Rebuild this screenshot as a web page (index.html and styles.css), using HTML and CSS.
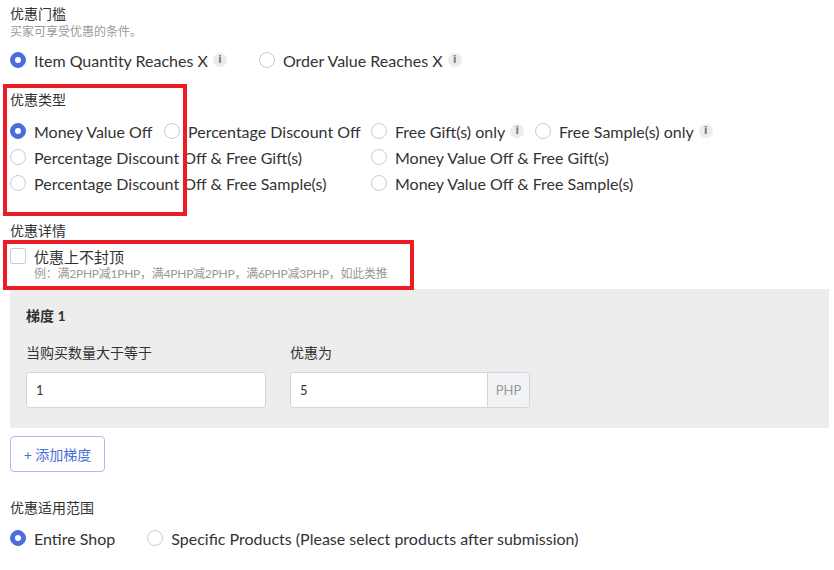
FILE: index.html
```html
<!DOCTYPE html>
<html lang="zh-CN">
<head>
<meta charset="UTF-8">
<meta name="viewport" content="width=device-width, initial-scale=1.0">
<title>优惠设置</title>
<link rel="stylesheet" href="styles.css">
</head>
<body>
<div id="wrapper">
    <!-- 优惠门槛 -->
    <div class="title">优惠门槛</div>
    <div class="hint">买家可享受优惠的条件。</div>
    <div class="radioRow">
        <label class="radio"><span class="dot on"></span>Item Quantity Reaches X<span class="info">i</span></label>
        <label class="radio"><span class="dot"></span>Order Value Reaches X<span class="info">i</span></label>
    </div>

    <!-- 优惠类型 -->
    <div class="title typeTitle">优惠类型</div>
    <div class="typeGrid">
        <label class="radio"><span class="dot on"></span>Money Value Off</label>
        <label class="radio"><span class="dot"></span>Percentage Discount Off</label>
        <label class="radio"><span class="dot"></span>Free Gift(s) only<span class="info">i</span></label>
        <label class="radio"><span class="dot"></span>Free Sample(s) only<span class="info">i</span></label>
        <label class="radio span2"><span class="dot"></span>Percentage Discount Off &amp; Free Gift(s)</label>
        <label class="radio span2"><span class="dot"></span>Money Value Off &amp; Free Gift(s)</label>
        <label class="radio span2"><span class="dot"></span>Percentage Discount Off &amp; Free Sample(s)</label>
        <label class="radio span2"><span class="dot"></span>Money Value Off &amp; Free Sample(s)</label>
    </div>

    <!-- 优惠详情 -->
    <div class="title detailTitle">优惠详情</div>
    <label class="check"><span class="box"></span>优惠上不封顶</label>
    <div class="example">例：满2PHP减1PHP，满4PHP减2PHP，满6PHP减3PHP，如此类推</div>

    <div class="tier">
        <div class="tierName">梯度 1</div>
        <div class="tierFields">
            <div class="field">
                <div class="fieldLabel">当购买数量大于等于</div>
                <div class="input">1</div>
            </div>
            <div class="field">
                <div class="fieldLabel">优惠为</div>
                <div class="input group"><span class="val">5</span><span class="addon">PHP</span></div>
            </div>
        </div>
    </div>
    <button class="addBtn">+ 添加梯度</button>

    <!-- 优惠适用范围 -->
    <div class="title scopeTitle">优惠适用范围</div>
    <div class="radioRow">
        <label class="radio"><span class="dot on"></span>Entire Shop</label>
        <label class="radio"><span class="dot"></span>Specific Products (Please select products after submission)</label>
    </div>

    <!-- 标注框 -->
    <div class="mark mark1"></div>
    <div class="mark mark2"></div>
</div>
</body>
</html>
```

FILE: styles.css
```css
body{
    margin: 0;
    background-color: #fff;
    font-family: "Lato", "Noto Sans CJK SC", sans-serif;
    color: #333;
}
#wrapper{
    position: relative;
    padding: 4px 5px 0 10px;
}
.title{
    font-size: 14px;
    line-height: 20px;
    color: #333;
}
.hint{
    font-size: 12px;
    line-height: 16px;
    color: #999;
}
.radioRow{
    display: flex;
    gap: 32px;
    margin-top: 7px;
}
.radio{
    display: flex;
    align-items: center;
    height: 26px;
    font-size: 16px;
    color: #333;
    white-space: nowrap;
}
.dot{
    width: 14px;
    height: 14px;
    border: 1px solid #c9ccd3;
    border-radius: 50%;
    margin-right: 8px;
    background-color: #fff;
    position: relative;
    flex: none;
}
.dot.on{
    background-color: #4a6ee0;
    border-color: #4a6ee0;
}
.dot.on::after{
    content: "";
    position: absolute;
    left: 4px;
    top: 4px;
    width: 6px;
    height: 6px;
    border-radius: 50%;
    background-color: #fff;
}
.info{
    width: 14px;
    height: 14px;
    border-radius: 50%;
    background-color: #ececec;
    color: #777;
    font-size: 10px;
    font-weight: bold;
    line-height: 14px;
    text-align: center;
    margin-left: 5px;
    font-family: "DejaVu Sans", sans-serif;
}
.typeTitle{
    margin-top: 17px;
}
.typeGrid{
    display: grid;
    grid-template-columns: 154px 207px 164px auto;
    margin-top: 8px;
}
.span2{
    grid-column: span 2;
}
.detailTitle{
    margin-top: 25px;
}
.check{
    display: flex;
    align-items: center;
    height: 20px;
    margin-top: 5px;
    font-size: 15px;
}
.box{
    width: 14px;
    height: 14px;
    border: 1px solid #c9ccd3;
    border-radius: 2px;
    margin-right: 8px;
}
.example{
    padding-left: 24px;
    font-size: 12px;
    line-height: 16px;
    color: #999;
    letter-spacing: -0.25px;
}
.tier{
    margin-top: 7px;
    background-color: #ededed;
    padding: 17px 16px 20px;
}
.tierName{
    font-size: 14px;
    font-weight: bold;
    line-height: 20px;
}
.tierFields{
    display: flex;
    gap: 24px;
    margin-top: 17px;
}
.fieldLabel{
    font-size: 14px;
    line-height: 20px;
    margin-bottom: 9px;
}
.input{
    width: 240px;
    height: 36px;
    box-sizing: border-box;
    border: 1px solid #d6d6d6;
    border-radius: 3px;
    background-color: #fff;
    padding-left: 9px;
    font-size: 13px;
    line-height: 34px;
}
.input.group{
    display: flex;
}
.val{
    flex: 1;
}
.addon{
    width: 41px;
    border-left: 1px solid #d6d6d6;
    background-color: #f2f3f7;
    color: #999;
    text-align: center;
    border-radius: 0 3px 3px 0;
}
.addBtn{
    display: block;
    margin-top: 8px;
    width: 95px;
    height: 36px;
    border: 1px solid #a9bbf0;
    border-radius: 4px;
    background-color: #fff;
    color: #4a6ee0;
    font-size: 14px;
    font-family: "Lato", "Noto Sans CJK SC", sans-serif;
    padding: 0;
}
.scopeTitle{
    margin-top: 26px;
}
.mark{
    position: absolute;
    border: 4px solid #ec1c24;
    box-sizing: border-box;
}
.mark1{
    left: 3px;
    top: 84px;
    width: 184px;
    height: 132px;
}
.mark2{
    left: 3px;
    top: 240px;
    width: 411px;
    height: 50px;
}
```
